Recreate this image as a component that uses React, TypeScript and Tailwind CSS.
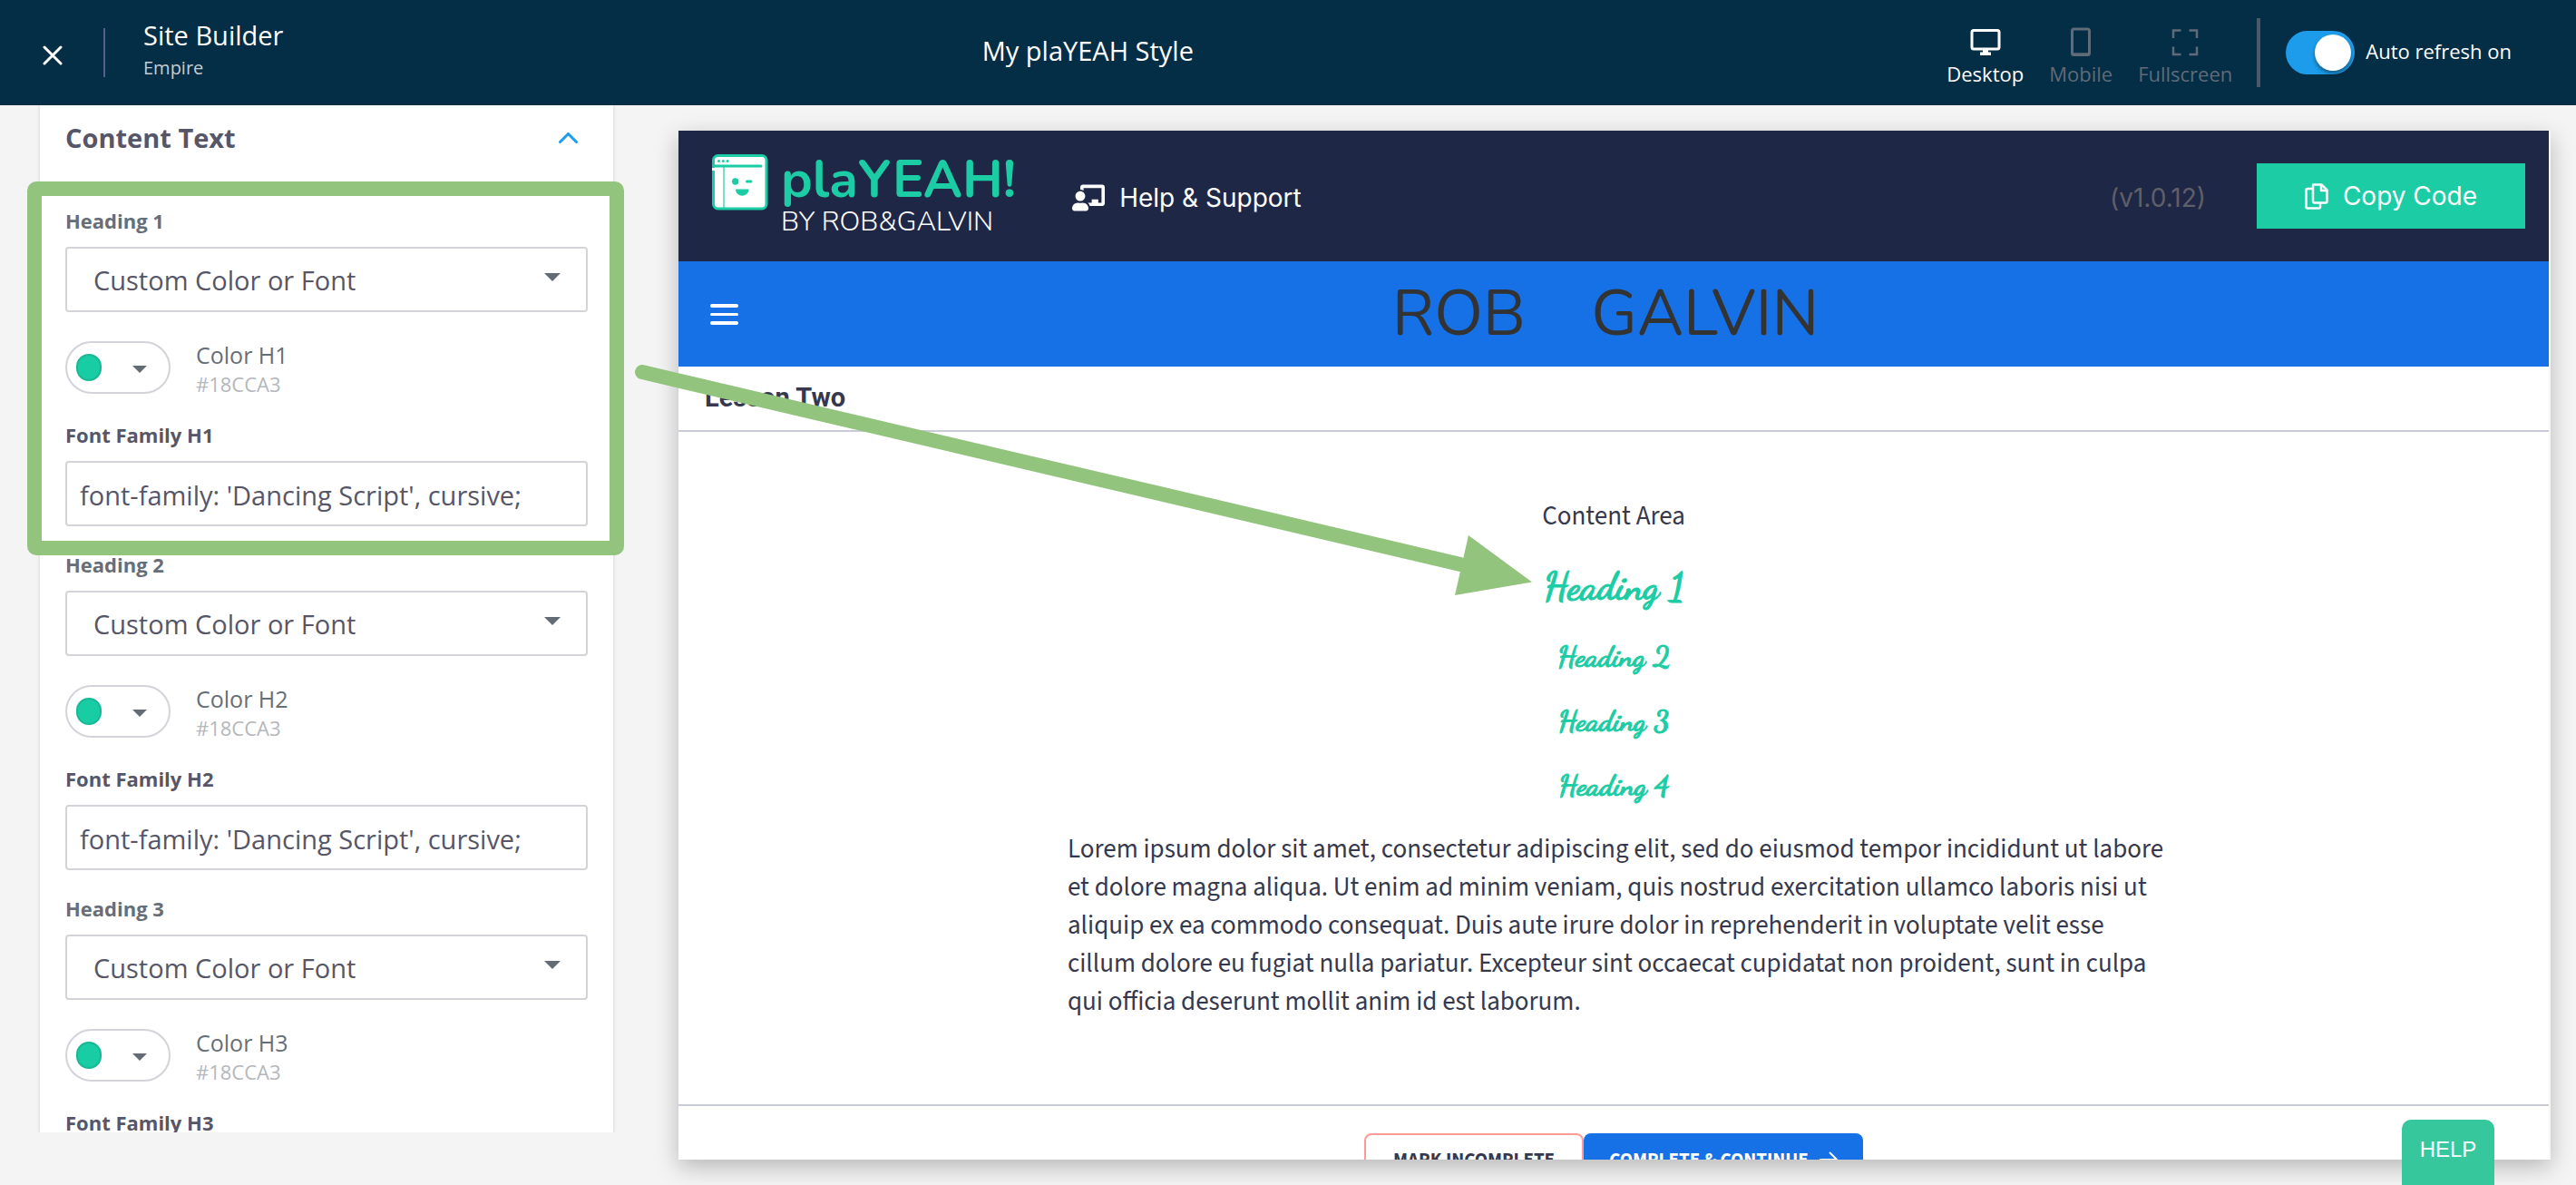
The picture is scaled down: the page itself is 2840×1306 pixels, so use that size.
import { FaChalkboardTeacher } from 'react-icons/fa';

const GREEN = '#92c47d';

function Caret({ className }: { className: string }) {
  return (
    <svg viewBox="0 0 18 9" className={className} aria-hidden="true">
      <path d="M0 0h18L9 9z" fill="#636b74" />
    </svg>
  );
}

function HeadingFields({ level, highlighted }: { level: number; highlighted?: boolean }) {
  return (
    <section className="relative pb-[27px]">
      <label htmlFor={`heading-${level}`} className="block text-[22px] leading-[30px] font-bold text-[#666e78]">
        Heading {level}
      </label>
      <div className="relative mt-[14px]">
        <select
          id={`heading-${level}`}
          className="block h-[72px] w-full appearance-none rounded-[4px] border-2 border-[#d3d4da] bg-white px-[29px] pt-[2px] text-[29px] text-[#565668]"
        >
          <option>Custom Color or Font</option>
        </select>
        <Caret className="pointer-events-none absolute top-[29px] right-[30px] h-[9px] w-[18px]" />
      </div>
      <div className="mt-8 flex items-center gap-7">
        <button
          aria-label={`Pick color H${level}`}
          className="flex h-[58px] w-[116px] items-center gap-[34px] rounded-full border-2 border-[#d3d4da] pl-[10px]"
        >
          <span className="h-[30px] w-7 rounded-full border-2 border-[#19b894] bg-[#18cca3]" />
          <Caret className="mt-1 h-[8px] w-4" />
        </button>
        <div className="h-[58px]">
          <div className="text-[25px] leading-[30px] text-[#666e78]">Color H{level}</div>
          <div className="mt-0.5 text-[22px] leading-[30px] text-[#b4b7bb]">#18CCA3</div>
        </div>
      </div>
      <label htmlFor={`family-${level}`} className="mt-[30px] block text-[22px] leading-[30px] font-bold text-[#565668]">
        Font Family H{level}
      </label>
      <input
        id={`family-${level}`}
        defaultValue="font-family: 'Dancing Script', cursive;"
        className="mt-[14px] block h-[72px] w-full rounded-[4px] border-2 border-[#d3d4da] bg-white px-[14px] pt-[2px] text-[29px] text-[#565668]"
      />
      {highlighted && (
        <div className="pointer-events-none absolute -top-[28px] -right-10 -left-[42px] h-[412px] rounded-[10px] bg-[#92c47d] [clip-path:polygon(evenodd,0_0,100%_0,100%_100%,0_100%,0_0,16px_16px,calc(100%-16px)_16px,calc(100%-16px)_calc(100%-16px),16px_calc(100%-16px),16px_16px)]" />
      )}
    </section>
  );
}

function TopBar() {
  return (
    <header className="flex h-[116px] shrink-0 items-center justify-between bg-[#042d46] pr-[71px] pl-[47px] text-white">
      <div className="flex items-center">
        <button aria-label="Close" className="mt-1.5">
          <svg viewBox="0 0 22 22" className="h-[22px] w-[22px]" stroke="white" strokeWidth="3" strokeLinecap="round">
            <path d="M2 2l18 18M20 2L2 20" />
          </svg>
        </button>
        <div className="ml-[45px] h-[54px] w-[2px] bg-[#5a5b90]" />
        <div className="ml-[42px] pb-1.5">
          <h1 className="text-[29px] leading-9">Site Builder</h1>
          <p className="mt-1 text-xl leading-7 text-[#c5cbd3]">Empire</p>
        </div>
      </div>
      <div className="pb-1 text-[29px] leading-9">My plaYEAH Style</div>
      <div className="flex items-center pl-[60px]">
        <nav className="flex gap-7 pt-2 text-[22px] leading-[30px] text-[#5f6b78]">
          <button className="flex flex-col items-center gap-1 text-white">
            <svg viewBox="0 0 34 34" className="h-[34px] w-[34px]" fill="none">
              <rect x="2" y="5.500" width="30" height="20.500" rx="2" stroke="currentColor" strokeWidth="3" />
              <path d="M14 26h6v3.500h3V33H11v-3.500h3z" fill="currentColor" />
            </svg>
            Desktop
          </button>
          <button className="flex flex-col items-center gap-1">
            <svg viewBox="0 0 34 34" className="h-[34px] w-[34px]" fill="none">
              <rect x="7.500" y="4" width="19" height="28.500" rx="2" stroke="currentColor" strokeWidth="3" />
              <path d="M7 31.500h20" stroke="currentColor" strokeWidth="2.500" />
            </svg>
            Mobile
          </button>
          <button className="flex flex-col items-center gap-1">
            <svg viewBox="0 0 34 34" className="h-[34px] w-[34px]" fill="none" stroke="currentColor" strokeWidth="2.500">
              <path d="M4 14V5.500h8.500M21.500 5.500H30V14M30 23.500V32h-8.500M12.500 32H4v-8.500" />
            </svg>
            Fullscreen
          </button>
        </nav>
        <div className="ml-[27px] h-[76px] w-1 bg-[#495b68]" />
        <label className="ml-7 flex items-center gap-3 text-[22px] leading-[30px]">
          <input
            type="checkbox"
            role="switch"
            defaultChecked
            className="h-12 w-[76px] appearance-none rounded-full bg-[#1c9cea] before:mt-1 before:ml-8 before:block before:h-10 before:w-10 before:rounded-full before:bg-white before:shadow-[0_3px_4px_rgba(0,0,0,0.4)]"
          />
          <span className="pb-1">Auto refresh on</span>
        </label>
      </div>
    </header>
  );
}

function Logo() {
  return (
    <div className="flex gap-[14px] pb-0.5">
      <svg viewBox="0 0 62 62" className="h-[62px] w-[62px]" fill="none">
        <rect x="1.500" y="1.500" width="58.500" height="58.500" rx="5" fill="white" stroke="#1bcca4" strokeWidth="3" />
        <path d="M2 13h52" stroke="#1bcca4" strokeWidth="3" strokeLinecap="round" />
        <path d="M1.500 15v3" stroke="white" strokeWidth="3" />
        <path d="M13 14v45" stroke="#1bcca4" strokeOpacity="0.6" strokeWidth="2" />
        <g fill="#1bcca4">
          <circle cx="7.500" cy="7.500" r="1.500" />
          <circle cx="12.300" cy="7.500" r="1.500" />
          <circle cx="17" cy="7.500" r="1.500" />
          <circle cx="25.700" cy="30" r="3.700" />
          <path d="M26 38.500h14.500c0 9.500-14.500 9.500-14.500 0z" />
        </g>
        <path d="M38.500 30h4.500" stroke="#1bcca4" strokeWidth="3" strokeLinecap="round" />
      </svg>
      <div className="font-[Nunito,Lato,sans-serif]">
        <div className="text-[58px] leading-[56px] font-bold text-[#1bcca4]">plaYEAH!</div>
        <div className="mt-[3px] text-[30px] leading-8 font-light text-white">BY ROB&amp;GALVIN</div>
      </div>
    </div>
  );
}

function CopyIcon() {
  return (
    <svg viewBox="0 0 26 30" className="h-[30px] w-[26px]" fill="none" stroke="white" strokeWidth="2.500" strokeLinejoin="round">
      <path d="M9 2.500h9.500l6 6V21a1.500 1.500 0 0 1-1.500 1.500H10.500A1.500 1.500 0 0 1 9 21z" />
      <path d="M18 2.500V9h6.500" />
      <path d="M9 7H3a1.500 1.500 0 0 0-1.500 1.500v18A1.500 1.500 0 0 0 3 28.500h12.500A1.500 1.500 0 0 0 17 27v-4.500" />
    </svg>
  );
}

function Preview() {
  return (
    <div className="flex min-w-0 flex-1 flex-col overflow-hidden border-r-2 border-[#f7f7f7] bg-white text-[#36394d]">
      <div className="flex h-36 shrink-0 items-center bg-[#1f2747] pr-[26px] pl-[37px] font-[Inter,sans-serif] text-[28px] text-white">
        <Logo />
        <a href="#support" className="ml-[62px] flex items-center gap-4 pt-1">
          <FaChalkboardTeacher className="h-8 w-9" />
          Help &amp; Support
        </a>
        <span className="ml-auto pt-1 text-[#5f5f68]">(v1.0.12)</span>
        <button className="ml-14 flex h-[72px] w-[296px] items-center justify-center gap-4 bg-[#1bcca4]">
          <CopyIcon />
          Copy Code
        </button>
      </div>
      <div className="grid h-[116px] shrink-0 grid-cols-[1fr_auto_1fr] items-center bg-[#1771e6] px-[35px]">
        <button aria-label="Menu" className="flex w-[31px] flex-col gap-1.5">
          <span className="h-1 rounded bg-white" />
          <span className="h-[3px] rounded bg-white" />
          <span className="h-1 rounded bg-white" />
        </button>
        <div className="flex gap-[72px] pr-[18px] font-[Nunito,Lato,sans-serif] text-[70px] leading-none text-[#333]">
          <span>ROB</span>
          <span>GALVIN</span>
        </div>
      </div>
      <h2 className="shrink-0 border-b-2 border-[#c9cbd9] px-[29px] pt-[15px] pb-[17px] font-[Roboto,sans-serif] text-[29px] leading-[38px] font-bold">
        Lesson Two
      </h2>
      <article className="mx-auto w-[1204px] max-w-full shrink-0 pt-[72px] pb-[92px] text-center font-['Source_Sans_Pro','Source_Sans_3','Noto_Sans_CJK_SC',sans-serif] text-[29px] leading-[42px]">
        <p>Content Area</p>
        <div className="font-['Dancing_Script',cursive] font-bold text-[#1bcca4] [-webkit-text-stroke:1px_#1bcca4]">
          <h1 className="mt-8 text-[42px] leading-[50px]">Heading 1</h1>
          <h2 className="mt-[33px] text-[32px] leading-[38px]">Heading 2</h2>
          <h3 className="mt-[33px] text-[32px] leading-[38px]">Heading 3</h3>
          <h4 className="mt-[33px] text-[32px] leading-[38px]">Heading 4</h4>
        </div>
        <p className="mt-[30px] -mr-3 text-left">
          Lorem ipsum dolor sit amet, consectetur adipiscing elit, sed do eiusmod tempor incididunt ut labore et dolore
          magna aliqua. Ut enim ad minim veniam, quis nostrud exercitation ullamco laboris nisi ut aliquip ex ea commodo
          consequat. Duis aute irure dolor in reprehenderit in voluptate velit esse cillum dolore eu fugiat nulla
          pariatur. Excepteur sint occaecat cupidatat non proident, sunt in culpa qui officia deserunt mollit anim id
          est laborum.
        </p>
      </article>
      <footer className="flex shrink-0 justify-center border-t-2 border-[#c9cbd9] pt-[30px] font-['Source_Sans_Pro','Source_Sans_3','Noto_Sans_CJK_SC',sans-serif] text-[21px] leading-7 font-bold">
        <button className="h-[58px] w-[242px] rounded-lg border-2 border-[#ff9a94]">MARK INCOMPLETE</button>
        <button className="flex h-[58px] w-[308px] items-center justify-center gap-3 rounded-lg bg-[#1771e6] text-white">
          COMPLETE &amp; CONTINUE
          <svg viewBox="0 0 20 20" className="h-5 w-5" fill="none" stroke="white" strokeWidth="2">
            <path d="M0 10h19M11 2l8 8-8 8" />
          </svg>
        </button>
      </footer>
    </div>
  );
}

export default function App() {
  return (
    <div className="relative flex h-screen flex-col overflow-hidden bg-[#f4f4f4] font-['Open_Sans',sans-serif]">
      <TopBar />
      <main className="flex min-h-0 flex-1 gap-[72px] pr-7 pl-11">
        <aside className="mb-[58px] w-[632px] shrink-0 shadow-[0_0_4px_rgba(0,0,0,0.15)] [clip-path:inset(0_-44px_0_-44px)]">
          <div className="bg-white px-7 pt-[18px]">
            <button className="flex w-full items-center justify-between pr-[11px] text-[29px] leading-9 font-bold text-[#565668]">
              Content Text
              <svg viewBox="0 0 21 12" className="h-3 w-[21px]" fill="none" stroke="#1c9cea" strokeWidth="3" strokeLinecap="round">
                <path d="M1.500 10.500l9-9 9 9" />
              </svg>
            </button>
            <div className="mt-[58px]">
              <HeadingFields level={1} highlighted />
              <HeadingFields level={2} />
              <HeadingFields level={3} />
            </div>
          </div>
        </aside>
        <div className="mt-7 mb-7 flex min-w-0 flex-1 shadow-[0_8px_24px_rgba(0,0,0,0.25)]">
          <Preview />
        </div>
      </main>
      <svg
        viewBox="0 0 1000 260"
        className="pointer-events-none absolute top-[400px] left-[695px] h-[260px] w-[1000px]"
        aria-hidden="true"
      >
        <path d="M13 10L915 222" stroke={GREEN} strokeWidth="16" strokeLinecap="round" />
        <path d="M924 190L994 241.500 909 256z" fill={GREEN} />
      </svg>
      <button className="absolute right-[90px] bottom-0 h-[72px] w-[102px] rounded-t-[10px] bg-[#36c79c] pb-1.5 font-['Liberation_Sans',sans-serif] text-2xl text-white">
        HELP
      </button>
    </div>
  );
}
